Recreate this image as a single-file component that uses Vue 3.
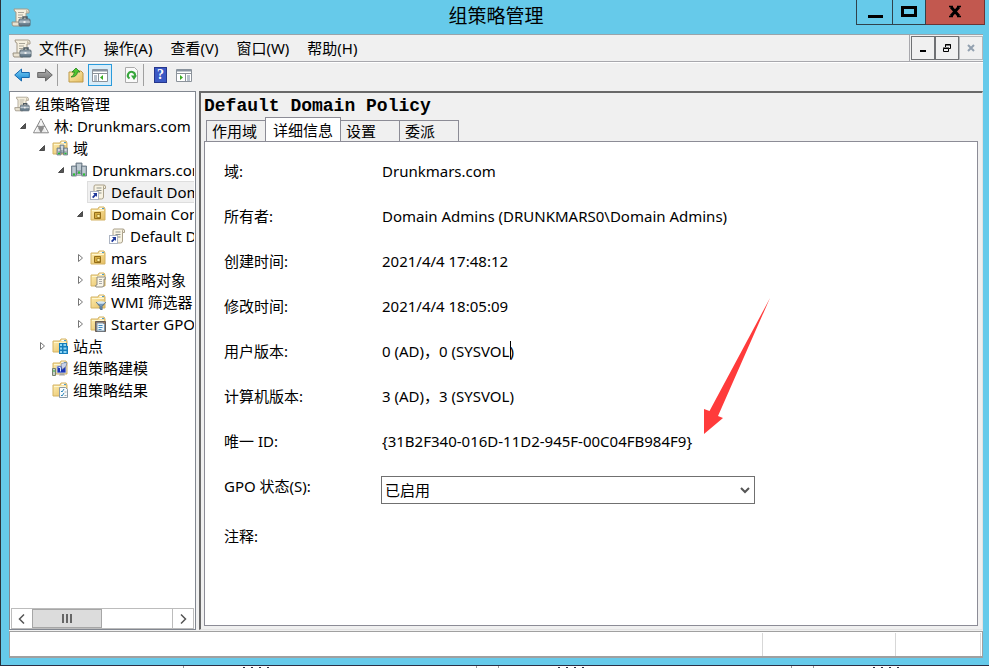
<script setup>
import { ref } from 'vue'

const menus = ['文件(F)', '操作(A)', '查看(V)', '窗口(W)', '帮助(H)']

const nodes = [
  { depth: 0, arrow: '', icon: 'console', label: '组策略管理' },
  { depth: 1, arrow: 'open', icon: 'forest', label: '林: Drunkmars.com' },
  { depth: 2, arrow: 'open', icon: 'folder', over: 'servers', label: '域' },
  { depth: 3, arrow: 'open', icon: 'domain', label: 'Drunkmars.com' },
  { depth: 4, arrow: '', icon: 'link', label: 'Default Domain Policy', selected: true },
  { depth: 4, arrow: 'open', icon: 'folder', over: 'ou', label: 'Domain Controllers' },
  { depth: 5, arrow: '', icon: 'link', label: 'Default Domain Controllers Policy' },
  { depth: 4, arrow: 'closed', icon: 'folder', over: 'ou', label: 'mars' },
  { depth: 4, arrow: 'closed', icon: 'folder', over: 'scroll', label: '组策略对象' },
  { depth: 4, arrow: 'closed', icon: 'folder', over: 'filter', label: 'WMI 筛选器' },
  { depth: 4, arrow: 'closed', icon: 'folder', over: 'starter', label: 'Starter GPO' },
  { depth: 2, arrow: 'closed', icon: 'folder', over: 'sites', label: '站点' },
  { depth: 2, arrow: '', icon: 'folder', over: 'model', label: '组策略建模' },
  { depth: 2, arrow: '', icon: 'folder', over: 'result', label: '组策略结果' },
]

const tabs = ['作用域', '详细信息', '设置', '委派']
const activeTab = ref(1)
const status = ref('已启用')

const details = [
  ['域:', 'Drunkmars.com'],
  ['所有者:', 'Domain Admins (DRUNKMARS0\\Domain Admins)'],
  ['创建时间:', '2021/4/4 17:48:12'],
  ['修改时间:', '2021/4/4 18:05:09'],
  ['用户版本:', '0 (AD)，0 (SYSVOL)'],
  ['计算机版本:', '3 (AD)，3 (SYSVOL)'],
  ['唯一 ID:', '{31B2F340-016D-11D2-945F-00C04FB984F9}'],
]
</script>

<template>
  <div class="screen">
    <svg class="defs" aria-hidden="true">
      <defs>
        <linearGradient id="gold" x1="0" y1="0" x2="1" y2="1">
          <stop offset="0" stop-color="#fff0b4" />
          <stop offset="1" stop-color="#e5bd62" />
        </linearGradient>
        <linearGradient id="steel" x1="0" y1="0" x2="0" y2="1">
          <stop offset="0" stop-color="#a5b3bd" />
          <stop offset="1" stop-color="#566d7e" />
        </linearGradient>
        <linearGradient id="azure" x1="0" y1="0" x2="0" y2="1">
          <stop offset="0" stop-color="#7fd0f7" />
          <stop offset="1" stop-color="#1286d0" />
        </linearGradient>
        <linearGradient id="grey" x1="0" y1="0" x2="0" y2="1">
          <stop offset="0" stop-color="#b5b5b5" />
          <stop offset="1" stop-color="#707070" />
        </linearGradient>
        <symbol id="i-console" viewBox="0 0 20 19">
          <path d="M3 1h13q2 0 2 2v2h-3v10H5V4Q3 4 3 1z" fill="#f6f0df" stroke="#a39a89" />
          <path d="M15 2q2 0 2 3h-2z" fill="#c8bda7" />
          <path d="M7 4.500h6M7 7h5M7 9.500h4" stroke="#aaa699" fill="none" />
          <path d="M1 14h10v4H2q-1-1-1-4z" fill="#e9e2d1" stroke="#999181" />
          <path d="M12 11V9h4v2" fill="none" stroke="#4d5962" stroke-width="1.500" />
          <rect x="8" y="11" width="11" height="7" rx="1" fill="url(#steel)" stroke="#596873" />
          <path d="M8 14h11" stroke="#d4dde2" /><rect x="12.500" y="13" width="2" height="2" fill="#eee" />
        </symbol>
        <symbol id="i-forest" viewBox="0 0 16 16">
          <path d="M8 .8l7.500 14H.5z" fill="#ececec" stroke="#888" />
          <path d="M4.500 8.200h7L8 14.500z" fill="#8c8c8c" stroke="#777" stroke-width=".6" />
          <path d="M8 2v6M2 14l3-5M14 14l-3-5" stroke="#fff" />
        </symbol>
        <symbol id="i-folder" viewBox="0 0 16 16">
          <path d="M1 3h7l1-2h5l1 2v11H1z" fill="url(#gold)" stroke="#d3b263" />
          <path d="M9.500 2.500h4" stroke="#fff" stroke-width="1.500" />
          <path d="M12 2.500h2" stroke="#4d9cc9" />
          <path d="M2 4.500h12" stroke="#fff7cf" />
        </symbol>
        <symbol id="i-domain" viewBox="0 0 16 16">
          <g fill="#9aa7b2" stroke="#60707c" stroke-width=".8">
            <path d="M5 1h6v11H5z" /><path d="M.5 4h5v10h-5zM10.500 4h5v10h-5z" />
          </g>
          <path d="M6 3h4M6 5h4M6 7h4M1.500 6h3M1.500 8h3M1.500 10h3M11.500 6h3M11.500 8h3M11.500 10h3" stroke="#e5eef3" />
          <path d="M2 12.500h2M12 12.500h2M7 10.500h2" stroke="#28c730" stroke-width="2" />
          <path d="M5.500 13.500h5" stroke="#aeb4b7" />
        </symbol>
        <symbol id="i-link" viewBox="0 0 16 16">
          <path d="M5 1h9q1.500 0 1.500 2v1.500h-2V13q0 2-2 2H4V3q0-2 1-2z" fill="#f8f3e2" stroke="#aaa18b" />
          <path d="M13.500 4.500V2.500q0-1 1-1" fill="none" stroke="#aaa18b" />
          <path d="M6.500 4h5M6.500 6.500h5M8 9h3.500" stroke="#8e938f" />
          <rect x=".5" y="7.500" width="8" height="8" fill="#fff" stroke="#adb5c3" />
          <path d="M3 9h4v4L5.800 11.800 3.300 14.200 2 13l2.400-2.500z" fill="#203a9b" />
        </symbol>
        <symbol id="o-servers" viewBox="0 0 16 16">
          <g fill="#a7b2ba" stroke="#637480" stroke-width=".7"><path d="M8 5h4v8H8zM5 8h4v7H5zM11.500 8h4v7h-4z" /></g>
          <path d="M9 7h2M6 10h2M12.500 10h2M9 9h2" stroke="#fff" />
          <path d="M6 13.500h2M12.500 13.500h2" stroke="#20bd35" stroke-width="1.500" />
        </symbol>
        <symbol id="o-ou" viewBox="0 0 16 16">
          <path d="M4.500 6.500h6v6h-6z" fill="#d6ae43" stroke="#936d19" />
          <path d="M7 8.500h3v3H7z" fill="#fff0a2" stroke="#936d19" stroke-width=".7" />
        </symbol>
        <symbol id="o-scroll" viewBox="0 0 16 16">
          <path d="M7 5h8q1 0 1 2h-2v6q0 2-2 2H6q-1-1 0-2h1z" fill="#faf6e8" stroke="#8e8b80" />
          <path d="M9 7.500h3M9 9.500h3M9 11.500h3" stroke="#aaa" />
        </symbol>
        <symbol id="o-filter" viewBox="0 0 16 16">
          <path d="M6.500 8.500h9l-3.500 4v3.500l-2-1v-2.500z" fill="#7799ba" stroke="#4c6a87" />
          <ellipse cx="11" cy="8.500" rx="4" ry="1.300" fill="#d4e7f4" />
        </symbol>
        <symbol id="o-starter" viewBox="0 0 16 16">
          <path d="M5.500 5.500h10v10h-10z" fill="#9b7960" stroke="#665b55" />
          <path d="M7 7h6l1.500 1.500V15H7z" fill="#edf5fa" stroke="#7894ab" />
          <path d="M8.500 9.500h4M8.500 11.500h4M8.500 13.500h3" stroke="#438bc0" />
        </symbol>
        <symbol id="o-sites" viewBox="0 0 16 16">
          <path d="M7 5h8v3h1v8H7z" fill="#157dba" />
          <path d="M8 6h2v2H8zM11.500 6h2.500v2h-2.500zM8 9.500h2v2H8zM11.500 9.500h3v2h-3zM8 13h2v2H8zM11.500 13h3v2h-3z" fill="#8ed6f5" />
        </symbol>
        <symbol id="o-model" viewBox="0 0 16 16">
          <path d="M.5 8.500h3v7h-3z" fill="#c7d0c7" stroke="#76836f" /><path d="M1 11h2" stroke="#31af3d" />
          <path d="M5 6h9v7H5z" fill="#1a35b9" stroke="#c2cad6" />
          <path d="M9 4l2-1 4-.5-1 4-4 3z" fill="#c8d2ea" stroke="#6b7287" stroke-width=".6" />
          <path d="M6.500 7.500h2v4" fill="none" stroke="#d5e6ff" />
          <path d="M8 13.500h4l1 2H7z" fill="#a5a5a5" />
        </symbol>
        <symbol id="o-result" viewBox="0 0 16 16">
          <path d="M7.500 5.500h6l2 2v8h-8z" fill="#f8fbfd" stroke="#8a9aa6" />
          <path d="M9 9l1 1 2-3M9 13l1 1 2-3" fill="none" stroke="#2d87bb" /><path d="M12.500 10h2M12.500 13.500h2" stroke="#aaa" />
        </symbol>
      </defs>
    </svg>

    <div class="window">
      <header class="titlebar">
        <svg class="app-icon"><use href="#i-console" /></svg>
        <h1>组策略管理</h1>
        <div class="caption-buttons">
          <button class="cap" aria-label="最小化"><svg viewBox="0 0 16 14"><path d="M1 11.500h15" stroke="#000" stroke-width="3" /></svg></button>
          <button class="cap cap-max" aria-label="最大化"><svg viewBox="0 0 16 14"><path d="M1.500 2.500h13v8h-13z" fill="none" stroke="#000" stroke-width="3" /></svg></button>
          <button class="cap cap-close" aria-label="关闭"><svg viewBox="0 0 16 14"><path d="M4 2l8 9M12 2l-8 9" stroke="#000" stroke-width="3" /><path d="M2 1.500h4M10 1.500h4M2 11.500h4M10 11.500h4" stroke="#000" stroke-width="1.500" /></svg></button>
        </div>
      </header>

      <div class="client">
        <div class="menubar">
          <svg class="menu-icon"><use href="#i-console" /></svg>
          <nav class="menus"><button v-for="m in menus" :key="m" class="menu">{{ m }}</button></nav>
          <div class="mdi">
            <button class="mdi-btn" aria-label="最小化子窗口"><svg viewBox="0 0 10 10"><path d="M2 8h6" stroke="#000" stroke-width="2" /></svg></button>
            <button class="mdi-btn" aria-label="还原子窗口"><svg viewBox="0 0 10 10"><path d="M3.500 4V1.500h5v4H7M3 2h6" fill="none" stroke="#000" /><path d="M1.500 5.500h5v3h-5zM1 5h6" fill="none" stroke="#000" /></svg></button>
            <button class="mdi-btn mdi-off" aria-label="关闭子窗口" disabled><svg viewBox="0 0 10 10"><path d="M2 2l6 6M8 2l-6 6" stroke="#93a1b0" stroke-width="2" /></svg></button>
          </div>
        </div>

        <div class="toolbar">
          <button class="tool" aria-label="后退"><svg viewBox="0 0 16 16"><path d="M.7 8l6.800-6v3.500H15.300v5H7.500V14z" fill="url(#azure)" stroke="#1769ae" /></svg></button>
          <button class="tool" aria-label="前进"><svg viewBox="0 0 16 16"><path d="M15.300 8L8.500 2v3.500H.7v5H8.500V14z" fill="url(#grey)" stroke="#686868" /></svg></button>
          <i class="sep"></i>
          <button class="tool" aria-label="上一级"><svg viewBox="0 0 16 16"><path d="M1 5h5l1-1h6l2 2v9H1z" fill="url(#gold)" stroke="#bd9846" /><path d="M3 10q3-1 3.500-5H4L8 1l4 4H9.500Q9 10 3 10z" fill="#53c52f" stroke="#258220" stroke-width=".8" /></svg></button>
          <button class="tool tool-on" aria-label="显示/隐藏控制台树"><svg viewBox="0 0 16 16"><path d="M.5 2.500h15v12H.5zM.5 6.500h15M6.500 6.500v8" fill="#fff" stroke="#8b929a" /><path d="M1 3.500h14" stroke="#8994a1" stroke-width="2" /><path d="M2 9h3M2 11h3M2 13h3" stroke="#73879c" /><path d="M11 8v5l-3-2.500z" fill="#39ac23" /></svg></button>
          <button class="tool tool-refresh" aria-label="刷新"><svg viewBox="0 0 16 16"><path d="M2.500.5h9l3 3v12h-12z" fill="#fafafa" stroke="#aaa" /><path d="M6.500 11.500A3.600 3.600 0 1 1 12 9" fill="none" stroke="#36a63b" stroke-width="2" /><path d="M8 8.500h6L11 13z" fill="#36a63b" /></svg></button>
          <i class="sep"></i>
          <button class="tool help" aria-label="帮助">?</button>
          <button class="tool" aria-label="显示/隐藏操作窗格"><svg viewBox="0 0 16 16"><path d="M.5 2.500h15v12H.5zM.5 6.500h15M9.500 6.500v8" fill="#fff" stroke="#8b929a" /><path d="M1 3.500h14" stroke="#8994a1" stroke-width="2" /><path d="M11 9h3M11 11h3M11 13h3" stroke="#73879c" /><path d="M4 8v5l3-2.500z" fill="#39ac23" /></svg></button>
        </div>

        <main class="panes">
          <aside class="tree-pane">
            <ul class="tree">
              <li v-for="(n, i) in nodes" :key="i" class="node" :style="{ paddingLeft: n.depth * 19 + 'px' }">
                <svg v-if="n.arrow === 'open'" class="twist" viewBox="0 0 8 8"><path d="M6.500 1.500v5h-5z" fill="#555" stroke="#222" stroke-width=".7" /></svg>
                <svg v-else-if="n.arrow === 'closed'" class="twist" viewBox="0 0 8 8"><path d="M2.500.5L6.500 4l-4 3.500z" fill="#fff" stroke="#777" /></svg>
                <span :class="['entry', { selected: n.selected }]">
                  <svg class="node-icon"><use :href="'#i-' + n.icon" /><use v-if="n.over" :href="'#o-' + n.over" /></svg>
                  <span>{{ n.label }}</span>
                </span>
              </li>
            </ul>
            <div class="scrollbar">
              <button class="scroll-btn" aria-label="向左滚动"><svg viewBox="0 0 10 10"><path d="M7 .5L2.500 5 7 9.500" fill="none" stroke="#555" stroke-width="1.500" /></svg></button>
              <div class="track"><div class="thumb"><i></i><i></i><i></i></div></div>
              <button class="scroll-btn" aria-label="向右滚动"><svg viewBox="0 0 10 10"><path d="M3 .5L7.500 5 3 9.500" fill="none" stroke="#555" stroke-width="1.500" /></svg></button>
            </div>
          </aside>

          <section class="result-pane">
            <h2>Default Domain Policy</h2>
            <div class="tabs" role="tablist">
              <button v-for="(t, i) in tabs" :key="t" role="tab" :aria-selected="i === activeTab" :class="['tab', { active: i === activeTab }]" @click="activeTab = i">{{ t }}</button>
            </div>
            <div class="sheet">
              <dl class="details">
                <template v-for="[k, v] in details" :key="k">
                  <dt>{{ k }}</dt>
                  <dd>{{ v }}</dd>
                </template>
              </dl>
              <div class="status-row">
                <label for="gpo">GPO 状态(S):</label>
                <div class="combo">
                  <select id="gpo" v-model="status"><option>已启用</option></select>
                  <svg class="chevron" viewBox="0 0 10 8"><path d="M1 2l4 4 4-4" fill="none" stroke="#555" stroke-width="2" /></svg>
                </div>
              </div>
              <p class="comment">注释:</p>
              <i class="caret"></i>
              <svg class="pointer" viewBox="0 0 68 138"><path d="M67 1L15 119 20 121 1 137V112l5.500 2z" fill="#ff3b3b" /></svg>
            </div>
          </section>
        </main>

        <footer class="statusbar"><span class="msg"></span><span class="cell"></span><span class="cell cell-end"></span><span class="grip"></span></footer>
      </div>
    </div>
    <div class="below">
      <div v-for="n in 3" :key="n" class="slot"><i></i><i></i><i></i><i></i></div>
    </div>
  </div>
</template>

<style>
body { background: #fff; }
</style>

<style scoped>
.screen, .screen * { box-sizing: border-box; }
.screen { min-height: 100vh; display: flex; flex-direction: column; font: 15px/22px "Noto Sans", "Noto Sans CJK SC", sans-serif; color: #000; }
.defs { position: absolute; width: 0; height: 0; }
button { font: inherit; color: inherit; padding: 0; margin: 0; border: 0; background: none; border-radius: 0; }
h1, h2, p, ul, dl, dd { margin: 0; padding: 0; }
.window { flex: 1; display: flex; flex-direction: column; background: #66caea; border-left: 1px solid #2b3138; border-bottom: 1px solid #2b2f45; padding: 0 6px 7px 8px; }
.titlebar { height: 34px; display: grid; grid-template-columns: 1fr auto 1fr; align-items: center; }
.app-icon { width: 20px; height: 19px; margin-left: 2px; }
h1 { font-size: 19px; font-weight: 400; line-height: 30px; padding-bottom: 2px; }
.caption-buttons { align-self: start; justify-self: end; display: flex; margin-right: -2px; height: 25px; }
.cap { width: 37px; border: 1px solid #30424b; border-top: 0; display: grid; place-items: center; }
.cap + .cap { border-left: 0; width: 33px; }
.cap + .cap-close { width: 59px; background: #c2584f; border-color: #6b3434; }
.cap svg { width: 16px; height: 14px; }
.client { flex: 1; display: flex; flex-direction: column; background: #f0f0f0; border-top: 1px solid #9aa4aa; }
.menubar { height: 27px; display: flex; align-items: center; border-bottom: 1px solid #a8a8ad; padding-left: 3px; }
.menu-icon { width: 20px; height: 19px; margin-right: 7px; }
.menus { flex: 1; display: flex; gap: 18px; border-right: 1px solid #a8a8ad; height: 26px; }
.mdi { display: flex; margin-left: 1px; }
.mdi-btn { width: 24px; height: 24px; border: 1px solid #6f7174; display: grid; place-items: center; }
.mdi-off { border-color: #b4b7ba; }
.mdi-btn svg { width: 10px; height: 10px; }
.toolbar { height: 29px; display: flex; align-items: center; padding: 0 0 5px 2px; border-top: 1px solid #fff; }
.tool { width: 22px; height: 22px; display: grid; place-items: center; margin-right: 1px; }
.tool svg { width: 16px; height: 16px; }
.tool-on { border: 1px solid #2a9bdc; background: #d8ecf8; margin: 0 9px 0 0; width: 24px; }
.tool-refresh { width: 20px; margin-right: 2px; }
.sep { width: 1px; height: 22px; background: #a0a0a0; margin-right: 7px; }
.help { width: 13px; height: 16px; background: #3c59c4; border: 1px solid #26368c; color: #fff; font: bold 14px/14px "Liberation Serif", serif; margin: 0 6px 0 3px; }
.panes { flex: 1; display: flex; gap: 3px; padding-bottom: 1px; }
.tree-pane { width: 187px; display: flex; flex-direction: column; justify-content: space-between; background: #fff; border: 1px solid #828790; padding: 1px 1px 0; }
.tree { list-style: none; overflow: hidden; }
.node { height: 22px; display: flex; align-items: center; white-space: nowrap; }
.twist { width: 8px; height: 8px; flex: none; margin: 0 3px 0 -11px; }
.entry { display: flex; align-items: center; gap: 5px; padding: 0 3px; height: 22px; }
.selected { background: #f0f0f0; border: 1px solid #dedede; padding-left: 2px; }
.node-icon { width: 16px; height: 16px; flex: none; }
.scrollbar { display: flex; height: 21px; border: 1px solid #bcbcbc; }
.scroll-btn { width: 20px; display: grid; place-items: center; }
.scroll-btn svg { width: 10px; height: 10px; }
.track { flex: 1; border-right: 1px solid #bcbcbc; display: flex; }
.thumb { width: 50%; background: #dcdcdc; border: 1px solid #a6a6a6; display: flex; align-items: center; justify-content: center; gap: 2px; }
.thumb i { width: 2px; height: 9px; background: #666; }
.result-pane { flex: 1; display: flex; flex-direction: column; border: 1px solid #a0a0a0; border-width: 2px 1px 1px 2px; border-color: #696969 #e3e3e3 #e3e3e3 #696969; padding: 1px 4px 3px 3px; }
h2 { font: bold 18px/24px "Liberation Mono", monospace; }
.tabs { display: flex; align-items: flex-end; height: 23px; padding-left: 2px; }
.tab { height: 21px; border: 1px solid #8c8c96; border-bottom: 0; width: 60px; text-align: left; padding-left: 5px; line-height: 20px; }
.tab + .tab { margin-left: -1px; }
.tab + .tab.active { width: 76px; height: 25px; padding-left: 7px; background: #fff; position: relative; bottom: -1px; line-height: 22px; }
.sheet { flex: 1; position: relative; background: #fff; border: 1px solid #8c8c96; padding: 7px 19px; }
.details { display: grid; grid-template-columns: 158px 1fr; grid-auto-rows: 45px; line-height: 44px; }
.status-row { display: grid; grid-template-columns: 157px 374px; height: 45px; line-height: 44px; }
.combo { position: relative; align-self: center; margin-top: 6px; height: 28px; }
select { display: block; width: 100%; height: 28px; appearance: none; border: 1px solid #707070; border-radius: 0; background: #fff; color: #000; font: inherit; line-height: 24px; padding: 0 3px; }
.chevron { position: absolute; right: 5px; top: 10px; width: 10px; height: 8px; }
.comment { line-height: 54px; }
.caret { position: absolute; left: 305px; top: 199px; width: 1px; height: 18px; background: #000; }
.pointer { position: absolute; left: 498px; top: 155px; width: 68px; height: 138px; }
.statusbar { height: 27px; display: flex; background: #fff; border: 1px solid #a0a0a0; border-bottom-width: 2px; padding-top: 1px; }
.msg { flex: 1; border-right: 1px solid #d7d7d7; }
.cell { width: 133px; border-right: 1px solid #d7d7d7; }
.cell-end { width: 85px; }
.grip { width: 1px; }
.below { height: 2px; background: #fff; display: flex; overflow: hidden; padding-left: 183px; }
.slot { flex: 0 0 294px; margin-right: 21px; border: 1px solid #999; border-width: 0 1px; padding-left: 59px; display: flex; align-items: flex-end; gap: 6px; }
.slot i { width: 2px; height: 1px; background: #334; }
</style>
